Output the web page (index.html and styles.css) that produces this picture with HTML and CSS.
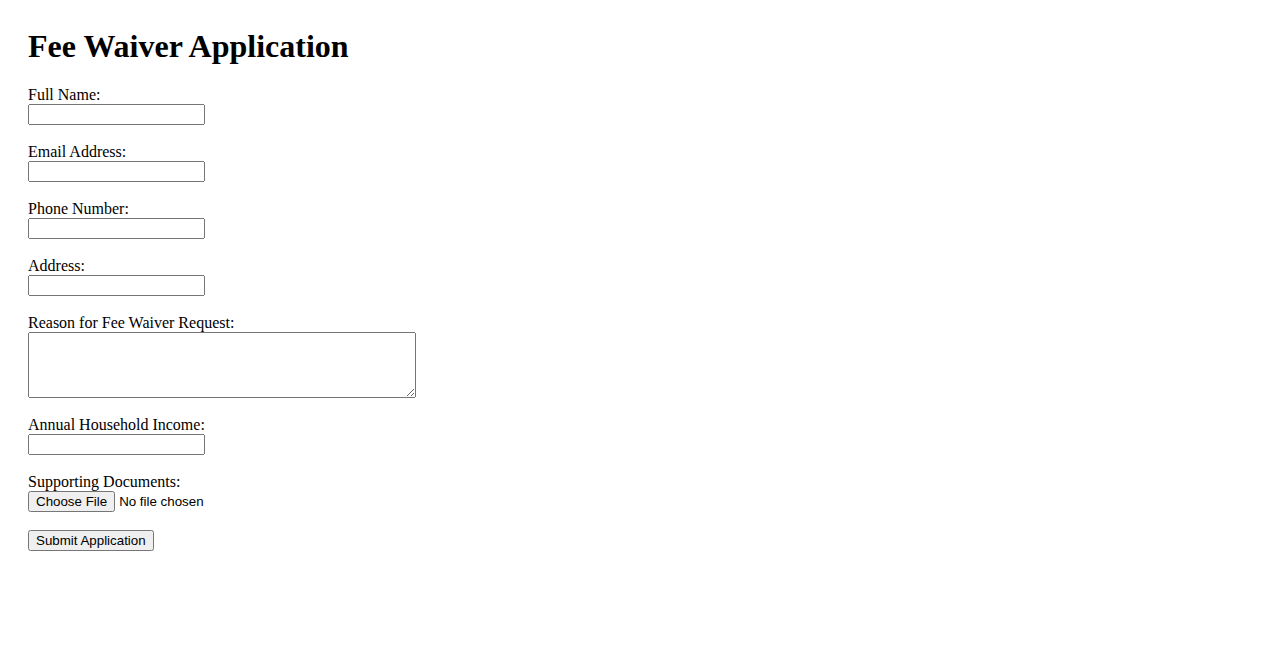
FILE: index.html
```html
<!DOCTYPE html>
<html>
<head>
<meta charset="utf-8">
<title>Fee Waiver Application</title>
<link rel="stylesheet" href="styles.css">
</head>
<body class="page">
<h1 class="title">Fee Waiver Application</h1>
<form class="form">
<label for="name">Full Name:</label><br>
<input class="field" type="text" id="name"><br><br>
<label for="email">Email Address:</label><br>
<input class="field" type="email" id="email"><br><br>
<label for="phone">Phone Number:</label><br>
<input class="field" type="tel" id="phone"><br><br>
<label for="address">Address:</label><br>
<input class="field" type="text" id="address"><br><br>
<label for="reason">Reason for Fee Waiver Request:</label><br>
<textarea class="area" id="reason"></textarea><br><br>
<label for="income">Annual Household Income:</label><br>
<input class="field" type="text" id="income"><br><br>
<label for="docs">Supporting Documents:</label><br>
<input class="file" type="file" id="docs"><br><br>
<input class="submit" type="submit" value="Submit Application">
</form>
</body>
</html>
```

FILE: styles.css
```css
.page {
  margin: 0;
  padding: 28px;
  font-family: "Liberation Serif", "Times New Roman", serif;
  font-size: 16px;
  color: #000;
  background: #fff;
}
.title {
  font-size: 32px;
  font-weight: bold;
  margin: 0 0 21.44px 0;
}
.form {
  margin: 0;
}
.field,
.file,
.submit {
  font-family: "Liberation Sans", Arial, sans-serif;
  font-size: 13.333px;
}
.field {
  width: 177px;
  height: 21px;
  box-sizing: border-box;
}
.area {
  width: 388px;
  height: 66px;
  box-sizing: border-box;
  vertical-align: bottom;
  font-family: "Liberation Mono", monospace;
  font-size: 13.333px;
}
```
